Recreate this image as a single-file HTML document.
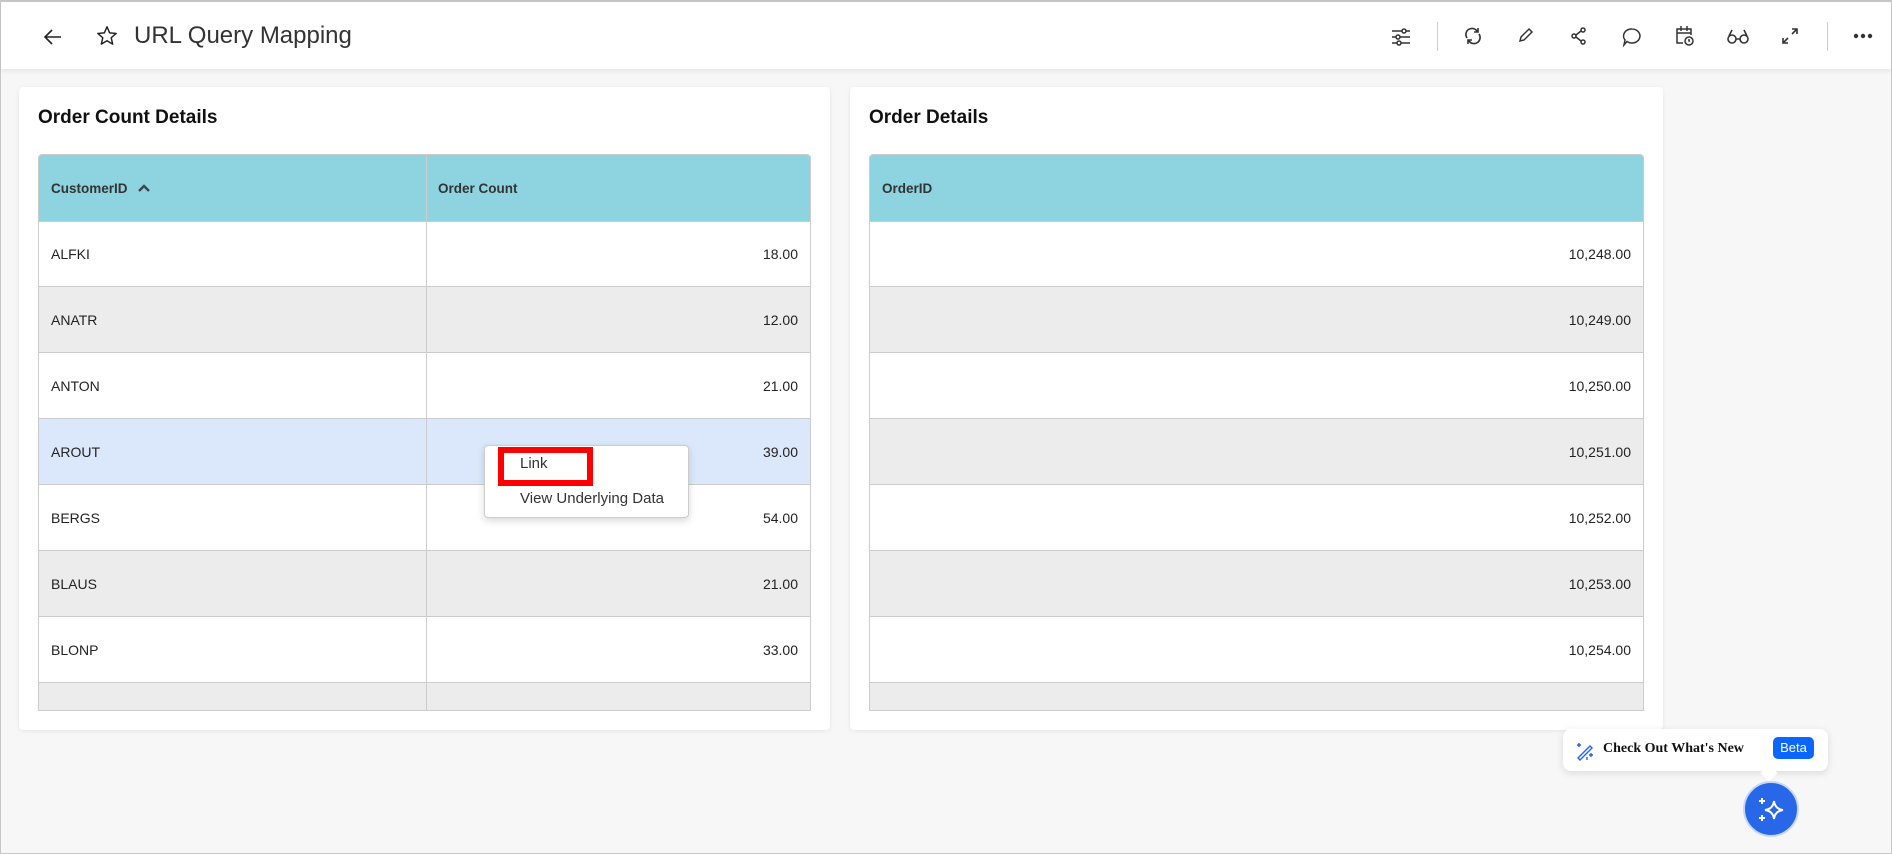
<!DOCTYPE html>
<html><head><meta charset="utf-8"><style>
*{box-sizing:border-box;margin:0;padding:0}
body{width:1892px;height:854px;background:#f7f7f7;font-family:"Liberation Sans",Arial,sans-serif;position:relative;overflow:hidden;border:1px solid #c8c8c8;border-top:2px solid #c8c8c8}
.hdr{position:absolute;left:0;top:0;width:1890px;height:67px;background:#fff;box-shadow:0 2px 5px rgba(0,0,0,.08)}
.title{position:absolute;left:133px;top:20px;font-size:24px;color:#333}
.ic{position:absolute;top:24px}
.sep{position:absolute;top:20px;width:1px;height:29px;background:#ccc}
.panel{position:absolute;top:85px;height:643px;background:#fff;border-radius:4px;box-shadow:0 1px 4px rgba(0,0,0,.08)}
.ptitle{position:absolute;left:19px;top:20px;font-size:19px;font-weight:bold;color:#111}
.tbl{position:absolute;top:67px;left:19px;right:19px;height:557px;border:1px solid #ccc;border-radius:4px 4px 0 0;overflow:hidden}
.row{position:absolute;left:0;right:0;height:66px;border-bottom:1px solid #ccc;font-size:14px;color:#222}
.h{background:#8dd3e0;height:67px;font-weight:bold;font-size:13.5px;color:#333}
.c{position:absolute;top:0;height:100%;display:flex;align-items:center;padding:0 12px}
.alt{background:#ececec}
.hl{background:#dbe8fb}
.div{position:absolute;top:0;bottom:0;left:387px;width:1px;background:#ccc}
</style></head><body>
<div class="hdr">
<svg class="ic" style="left:42px;top:25px" width="20" height="20" viewBox="0 0 20 20"><path d="M18 10H3M9 3l-7 7 7 7" fill="none" stroke="#222" stroke-width="1.6"/></svg>
<svg class="ic" style="left:95px;top:23px" width="22" height="22" viewBox="0 0 24 24"><path d="M12 2l2.9 6.6 7.1.6-5.4 4.7 1.6 7L12 17.2 5.8 20.9l1.6-7L2 9.2l7.1-.6z" fill="none" stroke="#222" stroke-width="1.6" stroke-linejoin="round"/></svg>
<div class="title">URL Query Mapping</div>
<svg class="ic" style="left:1389px" width="22" height="22" viewBox="0 0 22 22" fill="none" stroke="#333" stroke-width="1.5"><path d="M2 5h18M2 11h18M2 17h18"/><circle cx="14" cy="5" r="2" fill="#fff"/><circle cx="8" cy="11" r="2" fill="#fff"/><circle cx="9" cy="17" r="2" fill="#fff"/></svg>
<div class="sep" style="left:1436px"></div>
<svg class="ic" style="left:1462px" width="20" height="20" viewBox="0 0 20 20" fill="none" stroke="#333" stroke-width="1.6"><path d="M4 12a6 6 0 0 1 10-7l1 1M16 8a6 6 0 0 1-10 7l-1-1M15 2v4h-4M5 18v-4h4"/></svg>
<svg class="ic" style="left:1516px" width="18" height="18" viewBox="0 0 18 18" fill="none" stroke="#333" stroke-width="1.5"><path d="M3 15l1-4 8-8 3 3-8 8z"/></svg>
<svg class="ic" style="left:1569px" width="18" height="20" viewBox="0 0 18 20" fill="none" stroke="#333" stroke-width="1.5"><circle cx="13" cy="4" r="2"/><circle cx="4" cy="10" r="2"/><circle cx="13" cy="16" r="2"/><path d="M6 9l5-4M6 11l5 4"/></svg>
<svg class="ic" style="left:1620px" width="22" height="22" viewBox="0 0 22 22" fill="none" stroke="#333" stroke-width="1.5"><path d="M11 3a8 7 0 1 1-5 12.5L3 19l1-5A8 7 0 0 1 11 3z"/></svg>
<svg class="ic" style="left:1673px;top:22px" width="22" height="24" viewBox="0 0 22 24" fill="none" stroke="#333" stroke-width="1.5"><path d="M9 19H3V5h14v6M3 9h14M7 2v5M13 2v5"/><circle cx="15" cy="17" r="4"/><path d="M15 15v2h1"/></svg>
<svg class="ic" style="left:1725px" width="24" height="20" viewBox="0 0 24 20" fill="none" stroke="#333" stroke-width="1.6"><circle cx="6" cy="13" r="4"/><circle cx="18" cy="13" r="4"/><path d="M10 13h4M3 10l3-6M21 10l-3-6"/></svg>
<svg class="ic" style="left:1779px" width="20" height="20" viewBox="0 0 20 20" fill="none" stroke="#333" stroke-width="1.6"><path d="M12 3h5v5M17 3l-5 5M8 17H3v-5M3 17l5-5"/></svg>
<div class="sep" style="left:1826px"></div>
<svg class="ic" style="left:1852px;top:31px" width="20" height="6" viewBox="0 0 20 6" fill="#333"><circle cx="3" cy="3" r="2.2"/><circle cx="10" cy="3" r="2.2"/><circle cx="17" cy="3" r="2.2"/></svg>
</div>

<div class="panel" style="left:18px;width:811px">
<div class="ptitle">Order Count Details</div>
<div class="tbl">
<div class="row h" style="top:0"><div class="c" style="left:0">CustomerID <svg style="margin-left:9px" width="14" height="10" viewBox="0 0 14 10"><path d="M2 8l5-5 5 5" fill="none" stroke="#444" stroke-width="2.4"/></svg></div><div class="c" style="left:387px">Order Count</div></div>
<div class="row" style="top:66px"><div class="c">ALFKI</div><div class="c" style="right:0">18.00</div></div>
<div class="row alt" style="top:132px"><div class="c">ANATR</div><div class="c" style="right:0">12.00</div></div>
<div class="row" style="top:198px"><div class="c">ANTON</div><div class="c" style="right:0">21.00</div></div>
<div class="row hl" style="top:264px"><div class="c">AROUT</div><div class="c" style="right:0">39.00</div></div>
<div class="row" style="top:330px"><div class="c">BERGS</div><div class="c" style="right:0">54.00</div></div>
<div class="row alt" style="top:396px"><div class="c">BLAUS</div><div class="c" style="right:0">21.00</div></div>
<div class="row" style="top:462px"><div class="c">BLONP</div><div class="c" style="right:0">33.00</div></div>
<div class="row alt" style="top:528px;border:none"></div>
<div class="div"></div>
</div></div>

<div class="panel" style="left:849px;width:813px">
<div class="ptitle">Order Details</div>
<div class="tbl">
<div class="row h" style="top:0"><div class="c">OrderID</div></div>
<div class="row" style="top:66px"><div class="c" style="right:0">10,248.00</div></div>
<div class="row alt" style="top:132px"><div class="c" style="right:0">10,249.00</div></div>
<div class="row" style="top:198px"><div class="c" style="right:0">10,250.00</div></div>
<div class="row alt" style="top:264px"><div class="c" style="right:0">10,251.00</div></div>
<div class="row" style="top:330px"><div class="c" style="right:0">10,252.00</div></div>
<div class="row alt" style="top:396px"><div class="c" style="right:0">10,253.00</div></div>
<div class="row" style="top:462px"><div class="c" style="right:0">10,254.00</div></div>
<div class="row alt" style="top:528px;border:none"></div>
</div></div>

<div style="position:absolute;left:483px;top:443px;width:205px;height:73px;background:#fff;border:1px solid #ccc;border-radius:4px;box-shadow:0 3px 8px rgba(0,0,0,.15);font-size:15px;color:#333">
<div style="position:absolute;left:35px;top:9px">Link</div>
<div style="position:absolute;left:35px;top:44px">View Underlying Data</div>
</div>
<div style="position:absolute;left:497px;top:445px;width:95px;height:39px;border:6px solid #f00"></div>

<div style="position:absolute;left:1562px;top:727px;width:265px;height:42px;background:#fff;border-radius:8px;box-shadow:0 2px 8px rgba(0,0,0,.12)">
<svg style="position:absolute;left:12px;top:12px" width="20" height="20" viewBox="0 0 20 20" fill="none" stroke="#2563eb" stroke-width="1.4"><path d="M3 17L15 5l2 2L5 19zM4 2v4M2 4h4M16 12v4M14 14h4M12 16v3"/></svg>
<div style="position:absolute;left:40px;top:12px;font-family:'Liberation Serif',serif;font-weight:bold;font-size:14px;color:#111">Check Out What's New</div>
<div style="position:absolute;left:210px;top:8px;width:41px;height:22px;background:#0b66ff;border-radius:5px;color:#fff;font-size:13px;text-align:center;line-height:22px">Beta</div>
</div>
<div style="position:absolute;left:1762px;top:765px;width:12px;height:12px;background:#fff;transform:rotate(45deg)"></div>
<div style="position:absolute;left:1742px;top:779px;width:56px;height:56px;border-radius:50%;background:#2767e8;border:2px solid #c6d6f8">
<svg style="position:absolute;left:12px;top:12px" width="30" height="30" viewBox="0 0 30 30" fill="none" stroke="#fff" stroke-width="2"><path d="M17 6q1 8 9 9q-8 1-9 9q-1-8-9-9q8-1 9-9z"/><path d="M5 3v6M2 6h6M5 20v6M2 23h6"/></svg>
</div>
</body></html>
